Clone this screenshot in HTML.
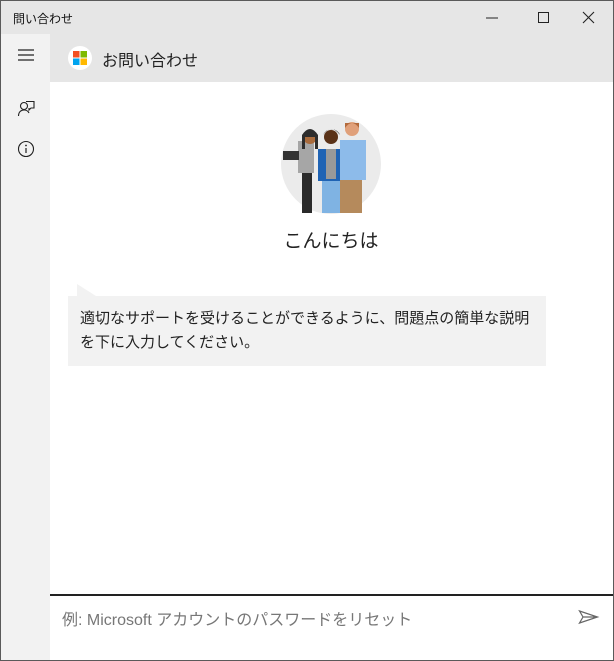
<!DOCTYPE html>
<html><head><meta charset="utf-8"><style>
*{margin:0;padding:0;box-sizing:border-box}
body{width:614px;height:661px;overflow:hidden;background:#fff;font-family:"Liberation Sans","Noto Sans CJK JP",sans-serif;position:relative}
.win{position:absolute;left:0;top:0;width:614px;height:661px;border:1px solid #5a5a5a;}
.title{position:absolute;left:0;top:0;width:612px;height:33px;background:#e6e6e6}
.title span{position:absolute;left:12px;top:9px;font-size:12px;color:#111}
.side{position:absolute;left:0;top:33px;width:49px;height:626px;background:#f2f2f2}
.head{position:absolute;left:49px;top:33px;width:563px;height:48px;background:#e6e6e6}
.head span{position:absolute;left:52px;top:13px;font-size:16px;color:#222}
.logo{position:absolute;left:18px;top:12px;width:24px;height:24px;border-radius:50%;background:#fff}
.hello{position:absolute;left:0;width:660px;top:225px;text-align:center;font-size:19px;color:#222}
.bub{position:absolute;left:67px;top:295px;width:478px;height:70px;background:#f2f2f2;padding:11px 12px;font-size:15px;line-height:24px;color:#222}
.line{position:absolute;left:49px;top:593px;width:563px;height:1.5px;background:#222}
.inp{position:absolute;left:61px;top:605px;font-size:16px;color:#777}
</style></head><body>
<div class="win">
<div class="title"><span>問い合わせ</span>
<svg style="position:absolute;left:480px;top:9px" width="122" height="16"><line x1="5" y1="8" x2="17" y2="8" stroke="#222"/><rect x="57.5" y="2.5" width="10" height="10" fill="none" stroke="#222"/><path d="M102 2L113 13M113 2L102 13" stroke="#222" stroke-width="1.1"/></svg>
</div>
<div class="side">
<svg style="position:absolute;left:16px;top:14px" width="20" height="14"><path d="M1 2H17M1 7H17M1 12H17" stroke="#222" stroke-width="1.2"/></svg>
<svg style="position:absolute;left:16px;top:65px" width="20" height="20"><circle cx="7" cy="7" r="3.5" fill="none" stroke="#222" stroke-width="1.1"/><path d="M1.5 17c0-4 2.5-6 5.5-6s4.5 2 5 3" fill="none" stroke="#222" stroke-width="1.1"/><path d="M9 2.5H17V9H14L12 11V9" fill="none" stroke="#222" stroke-width="1.1"/></svg>
<svg style="position:absolute;left:16px;top:106px" width="20" height="20"><circle cx="9" cy="9" r="7.5" fill="none" stroke="#222" stroke-width="1.1"/><path d="M9 8V13" stroke="#222" stroke-width="1.2"/><circle cx="9" cy="5.5" r=".9" fill="#222"/></svg>
</div>
<div class="head"><div class="logo"><svg style="position:absolute;left:5px;top:5px" width="14" height="14"><rect width="6.5" height="6.5" fill="#f25022"/><rect x="7.5" width="6.5" height="6.5" fill="#7fba00"/><rect y="7.5" width="6.5" height="6.5" fill="#00a4ef"/><rect x="7.5" y="7.5" width="6.5" height="6.5" fill="#ffb900"/></svg></div><span>お問い合わせ</span></div>
<svg style="position:absolute;left:279px;top:112px" width="102" height="102">
<circle cx="51" cy="51" r="50" fill="#ebebeb"/>
<rect x="22" y="54" width="10" height="46" fill="#2a2a2a"/>
<path d="M18 28h16v32h-16z" fill="#a6a6a6"/>
<circle cx="30" cy="24" r="7" fill="#a86b3d"/><path d="M22 22q8-12 16 0v14h-3v-12h-10v12h-3z" fill="#2d2d2d"/>
<rect x="3" y="38" width="16" height="9" fill="#333"/>
<rect x="42" y="64" width="18" height="36" fill="#7fb3e3"/>
<path d="M38 36h26v32h-26z" fill="#1f63b4"/><rect x="46" y="36" width="10" height="30" fill="#999"/>
<circle cx="51" cy="24" r="7" fill="#5a3218"/><path d="M43 22q8-12 17 0q-2-5-8-6q-6 0-9 6z" fill="#222"/>
<rect x="60" y="60" width="22" height="40" fill="#b58a5c"/>
<path d="M60 27h26v40h-26z" fill="#8dbbea"/>
<circle cx="72" cy="16" r="7" fill="#e0a07a"/><path d="M65 15q7-10 14 0v-5h-14z" fill="#b36a3c"/>
</svg>
<div class="hello">こんにちは</div>
<svg style="position:absolute;left:76px;top:283px" width="20" height="13"><path d="M0 0L19 12H0z" fill="#f2f2f2"/></svg>
<div class="bub">適切なサポートを受けることができるように、問題点の簡単な説明を下に入力してください。</div>
<div class="line"></div>
<div class="inp">例: Microsoft アカウントのパスワードをリセット</div>
<svg style="position:absolute;left:577px;top:608px" width="22" height="16"><path d="M1.5 2L19.5 8L1.5 14L5 8zM5 8H19" fill="none" stroke="#666" stroke-width="1.2"/></svg>
</div>
</body></html>
